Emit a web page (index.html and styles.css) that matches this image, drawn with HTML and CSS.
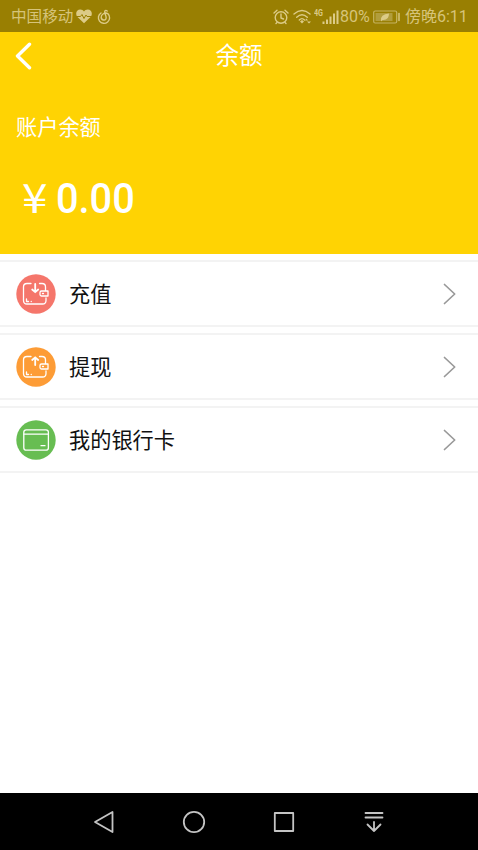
FILE: index.html
```html
<!DOCTYPE html>
<html lang="zh-CN">
<head>
<meta charset="utf-8">
<title>余额</title>
<link rel="stylesheet" href="styles.css">
</head>
<body>
<div class="screen">
  <div class="status">
    <span class="carrier">中国移动</span>
    <svg class="heart" width="16" height="15" viewBox="0 0 16 15"><path class="solid" d="M8 14.200 1.500 8C-1.200 5 .5.600 4.300.600 6 .6 7.200 1.400 8 2.500 8.800 1.400 10 .6 11.700.6 15.500.6 17.200 5 14.500 8z"/><path class="pulse" d="M0 7.500h4.500l1.500-2 2 4 2-3.500 1 1.500H16"/></svg>
    <svg class="music" width="14" height="16" viewBox="0 0 14 16"><path class="line" d="M4 4A5.600 5.600 0 1 0 11 4.800C9.500 3.800 7.500 4 6 5 3.500 6.500 3.500 10.500 6.500 11 8.800 11.300 9.500 9.500 9 7.500L7.800 3.500C7.300 1.500 8.800.8 10.200 2"/></svg>
    <span class="spacer"></span>
    <svg class="alarm" width="16" height="16" viewBox="0 0 16 16"><circle class="line" cx="8" cy="8.500" r="5.800"/><path class="line" d="M8 5v4l2.500 1M1 4l3-2.800M15 4l-3-2.800M4 13.500l-1 1M12 13.500l1 1"/></svg>
    <svg class="wifi" width="19" height="15" viewBox="0 0 19 15"><path class="line" d="M1 5Q9 -2 17 5M3.700 8.200Q9 3.200 14.300 8.200M6.300 11Q9 8.300 11.500 11"/><path class="solid" d="M9 11l2 1.500-2 2-2-2zM12 11.500l1.500-2 1.500 2zM14 12.500h4l-2 2z"/></svg>
    <svg class="signal" width="26" height="16" viewBox="0 0 26 16"><text class="net" x="0" y="7" textLength="9" lengthAdjust="spacingAndGlyphs">4G</text><path class="bars" d="M9.500 12.500V15M13 10.500V15M16.500 7.500V15M20 4.500V15M23.500 1.500V15"/></svg>
    <span class="percent">80%</span>
    <svg class="battery" width="27" height="14" viewBox="0 0 27 14"><rect class="shell" x=".7" y="1" width="23" height="12" rx="1.500"/><rect class="charge" x="2.500" y="3" width="17" height="8"/><path class="solid" d="M8 11Q7 4 16 3.500 16 10.500 9.500 10L8 11.500z"/><path class="line" d="M26 3.500v7"/></svg>
    <span class="clock">傍晚6:11</span>
  </div>
  <header class="hero">
    <div class="bar">
      <svg class="back" width="18" height="28" viewBox="0 0 18 28"><path d="M14.500 2.300 2.500 14l12 11.700"/></svg>
      <h1>余额</h1>
    </div>
    <p class="label">账户余额</p>
    <p class="amount"><span class="yen">¥</span><span class="sum">0.00</span></p>
  </header>
  <main class="list">
    <div class="row">
      <svg class="icon red" viewBox="0 0 40 40"><circle class="disc" cx="20" cy="20" r="19.700"/><path d="M15 9.500h-4Q7.500 9.500 7.500 13v13.500q0 3.500 3.500 3.500h15.500q3.500 0 3.500-3.500V24M23.500 9.500H26q3.500 0 3.500 3.500v3.500M32 17h-6.500a1.500 1.500 0 0 0-1.500 1.500v2a1.500 1.500 0 0 0 1.500 1.500H32zM10.500 25v2.500h2M15.200 27.500h.1M26.500 19.500h1"/><path class="arrow" d="M19.200 10v8M16.200 15.500l3 2.700 3-2.700"/></svg>
      <span class="name">充值</span>
      <svg class="chevron" width="14" height="22" viewBox="0 0 14 22"><path d="M1.500 1.500 11.700 11 1.500 20.500"/></svg>
    </div>
    <div class="row">
      <svg class="icon orange" viewBox="0 0 40 40"><circle class="disc" cx="20" cy="20" r="19.700"/><path d="M15 9.500h-4Q7.500 9.500 7.500 13v13.500q0 3.500 3.500 3.500h15.500q3.500 0 3.500-3.500V24M23.500 9.500H26q3.500 0 3.500 3.500v3.500M32 17h-6.500a1.500 1.500 0 0 0-1.500 1.500v2a1.500 1.500 0 0 0 1.500 1.500H32zM10.500 25v2.500h2M15.200 27.500h.1M26.500 19.500h1"/><path class="arrow" d="M19.200 18v-7.500M16.200 13l3-2.700 3 2.700"/></svg>
      <span class="name">提现</span>
      <svg class="chevron" width="14" height="22" viewBox="0 0 14 22"><path d="M1.500 1.500 11.700 11 1.500 20.500"/></svg>
    </div>
    <div class="row">
      <svg class="icon green" viewBox="0 0 40 40"><circle class="disc" cx="20" cy="20" r="19.700"/><rect x="7.800" y="9.800" width="24.600" height="20.400" rx="2.500"/><path d="M8 14.200h24M25 25.700h4"/></svg>
      <span class="name">我的银行卡</span>
      <svg class="chevron" width="14" height="22" viewBox="0 0 14 22"><path d="M1.500 1.500 11.700 11 1.500 20.500"/></svg>
    </div>
  </main>
  <nav class="keys">
    <svg width="24" height="24" viewBox="0 0 24 24"><path d="M20.500 2v20L3 12z"/></svg>
    <svg width="24" height="24" viewBox="0 0 24 24"><circle cx="12" cy="12" r="10.200"/></svg>
    <svg width="24" height="24" viewBox="0 0 24 24"><rect x="2.800" y="3" width="18.400" height="18"/></svg>
    <svg width="24" height="24" viewBox="0 0 24 24"><path d="M3.500 3h17M3.500 7.500h17M12 12v9M5.500 14.500l6.500 6.500 6.500-6.500"/></svg>
  </nav>
</div>
</body>
</html>
```
FILE: styles.css
```css
* {
  box-sizing: border-box;
}

body {
  margin: 0;
  font-family: Roboto, "Noto Sans CJK SC", sans-serif;
  background: #fff;
}

svg {
  display: block;
  flex: none;
  fill: none;
  stroke-linecap: round;
  stroke-linejoin: round;
}

h1,
p {
  margin: 0;
  font-weight: 400;
}

.screen {
  display: flex;
  flex-direction: column;
  width: 478px;
  height: 850px;
  overflow: hidden;
}

.status {
  display: flex;
  align-items: center;
  flex: none;
  height: 32px;
  padding: 1px 11px 0;
  background: #997f02;
  color: #d6c47a;
  font-size: 16px;
  line-height: 30px;
  font-weight: 400;
  white-space: nowrap;
}

.carrier {
  width: 65px;
  padding-top: 1px;
  font-size: 15.6px;
}

.spacer {
  flex: 1;
}

.solid {
  fill: #dccb87;
}

.line {
  stroke: #dccb87;
  stroke-width: 1.4;
}

.pulse {
  stroke: #997f02;
  stroke-width: 1;
}

.music {
  margin-left: 5px;
}

.alarm {
  margin-right: 4px;
}

.signal {
  margin-left: 2px;
}

.net {
  fill: #dccb87;
  font-size: 9px;
  font-weight: 700;
}

.bars {
  stroke: #dccb87;
  stroke-width: 2;
  stroke-linecap: butt;
}

.percent {
  width: 33px;
}

.battery {
  margin-right: 5px;
}

.shell {
  stroke: #c5b462;
  stroke-width: 1.2;
}

.charge {
  fill: #b19d3d;
}

.clock {
  width: 62px;
  padding-top: 1px;
}

.hero {
  flex: none;
  height: 221.5px;
  background: #ffd303;
  color: #fff;
}

.bar {
  display: grid;
  grid-template-columns: 60px 1fr 60px;
  align-items: center;
  height: 47px;
}

.back {
  margin-left: 15px;
  stroke: #fff;
  stroke-width: 3.4;
}

h1 {
  font-size: 23.5px;
  line-height: 46px;
  text-align: center;
}

.label {
  padding: 33px 0 0 16px;
  font-size: 21.2px;
  line-height: 32px;
}

.amount {
  display: flex;
  align-items: center;
  margin-top: 28px;
  padding-left: 22px;
  font-size: 42px;
  line-height: 54px;
  font-weight: 500;
}

.yen {
  width: 34px;
  font-family: "Noto Sans CJK SC", sans-serif;
  font-size: 41px;
  font-weight: 400;
  transform: translateY(-4px) scaleX(1.12);
  transform-origin: left;
}

.sum {
  transform: scaleX(.945);
  transform-origin: left;
}

.list {
  display: flex;
  flex: 1;
  flex-direction: column;
  gap: 6px;
  padding-top: 6.500px;
}

.row {
  display: flex;
  align-items: center;
  height: 67px;
  padding: 1.500px 21px 0 16px;
  border-top: 2px solid #f3f3f3;
  border-bottom: 2px solid #f3f3f3;
  color: #111;
}

.icon {
  width: 40px;
  height: 40px;
  stroke: #fff;
  stroke-width: 1.3;
}

.disc {
  stroke: none;
}

.red .disc {
  fill: #f5766b;
}

.orange .disc {
  fill: #fd9c36;
}

.green .disc {
  fill: #67bd52;
}

.arrow {
  stroke-width: 1.8;
}

.name {
  flex: 1;
  margin-left: 13px;
  padding-top: 1.500px;
  font-size: 21.2px;
  line-height: 32px;
}

.chevron {
  margin-bottom: 1px;
  stroke: #999;
  stroke-width: 1.7;
}

.keys {
  display: flex;
  align-items: center;
  flex: none;
  gap: 66.300px;
  height: 57px;
  padding-left: 91.500px;
  background: #000;
  stroke: #c4c4c4;
  stroke-width: 1.8;
}
```
